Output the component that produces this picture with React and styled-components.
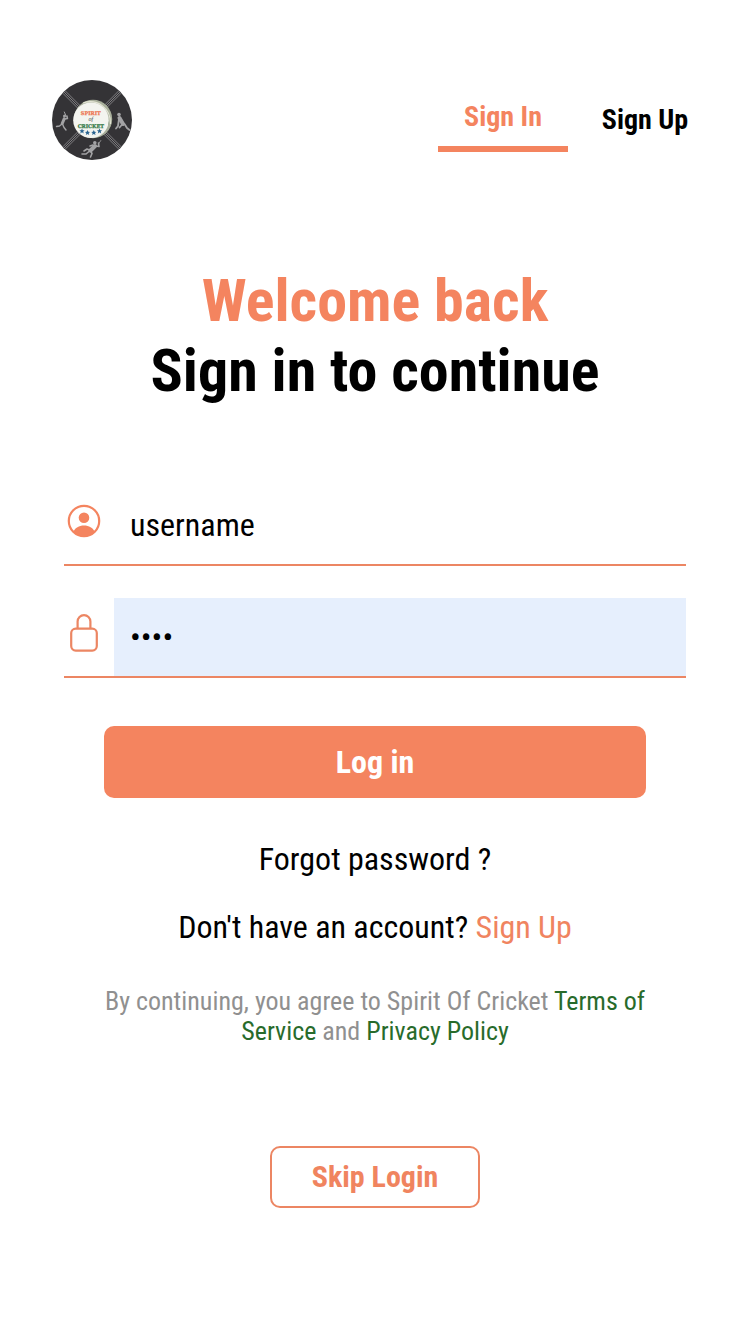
import React from "react";
import styled, { createGlobalStyle } from "styled-components";

const orange = "#f4845f";

const GlobalStyle = createGlobalStyle`
  * { box-sizing: border-box; }
  body {
    margin: 0;
    background: #fff;
    color: #000;
    font-family: "Roboto Condensed", "Liberation Sans Narrow", Roboto, sans-serif;
  }
`;

const Page = styled.div`
  display: flex;
  flex-direction: column;
  padding: 80px 40px;
`;

const Header = styled.header`
  display: flex;
  align-items: center;
  justify-content: space-between;
  padding-left: 12px;
`;

const LogoLink = styled.a`
  display: block;
  height: 80px;
`;

const Tabs = styled.nav`
  display: flex;
  align-items: center;
  gap: 12px;
`;

const Tab = styled.a`
  width: 130px;
  padding: ${(p) => (p.$active ? "13px 0" : "0")};
  border-bottom: ${(p) => (p.$active ? `6px solid ${orange}` : "0")};
  color: ${(p) => (p.$active ? orange : "#000")};
  font-size: 28px;
  font-weight: 700;
  line-height: 32px;
  text-align: center;
  text-decoration: none;
`;

const Title = styled.h1`
  margin: 106px 0 80px;
  font-size: 60px;
  font-weight: 700;
  line-height: 70px;
  text-align: center;
`;

const TitleLine = styled.span`
  display: block;
  color: ${(p) => (p.$accent ? orange : "inherit")};
`;

const Form = styled.form`
  display: flex;
  flex-direction: column;
  gap: 32px;
  padding: 0 24px;
`;

const Field = styled.label`
  display: flex;
  height: 80px;
  border-bottom: 2px solid #ec8663;
`;

const IconSlot = styled.span`
  display: flex;
  flex: none;
  align-items: center;
  justify-content: center;
  width: 40px;
  height: 70px;
`;

const Input = styled.input`
  flex: 1;
  min-width: 0;
  margin-left: 10px;
  padding: 0 16px;
  border: 0;
  border-radius: 0;
  outline: 0;
  background: ${(p) => (p.$filled ? "#e6effd" : "transparent")};
  color: #000;
  font-family: inherit;
  font-size: 32px;

  &::placeholder {
    color: #000;
    opacity: 1;
  }
`;

const LoginButton = styled.button`
  height: 72px;
  margin: 16px 40px 0;
  border: 0;
  border-radius: 10px;
  background: ${orange};
  color: #fff;
  font-family: inherit;
  font-size: 32px;
  font-weight: 700;
`;

const Links = styled.div`
  display: flex;
  flex-direction: column;
  align-items: center;
  gap: 28px;
  margin-top: 41px;
  font-size: 32px;
  line-height: 40px;
`;

const TextLink = styled.a`
  color: ${(p) => p.$color || "inherit"};
  text-decoration: none;
`;

const Line = styled.p`
  margin: 0;
`;

const Terms = styled.p`
  max-width: 560px;
  margin: 39px auto 100px;
  color: #909090;
  font-size: 26px;
  line-height: 30px;
  text-align: center;
`;

const SkipButton = styled.button`
  align-self: center;
  width: 210px;
  height: 62px;
  padding: 0 0 2px;
  border: 2px solid #ec8663;
  border-radius: 10px;
  background: #fff;
  color: #f0845f;
  font-family: inherit;
  font-size: 30px;
  font-weight: 700;
`;

const star = "M0-2.6 .8-.8 2.6-.7 1.2.5 1.7 2.4 0 1.3-1.7 2.4-1.2.5-2.6-.7-.8-.8Z";

function Logo() {
  return (
    <svg width="80" height="80" viewBox="0 0 80 80" role="img" aria-label="Spirit of Cricket">
      <defs>
        <clipPath id="disc">
          <circle cx="40" cy="40" r="40" />
        </clipPath>
      </defs>
      <circle cx="40" cy="40" r="40" fill="#343336" />
      <g clipPath="url(#disc)" stroke="#88878a" strokeWidth=".9">
        <path d="M10.800 13.200 66.800 69.200M12 12 68 68M13.200 10.800 69.200 66.800M69.200 13.200 13.200 69.200M68 12 12 68M66.800 10.800 10.800 66.800" />
      </g>
      <circle cx="41" cy="39" r="19.200" fill="#a9b09c" />
      <path d="M31 23c14-5 28 5 27.500 21" fill="none" stroke="#e4e5d5" strokeWidth="1.200" />
      <path d="M32 24.500c12-4 25 5 24.500 20" fill="none" stroke="#5f7a58" strokeWidth="1" />
      <circle cx="39" cy="40.200" r="17.800" fill="#f3f4ef" />
      <text x="38.800" y="35" textAnchor="middle" fontFamily="DejaVu Serif, serif" fontWeight="700" fontSize="5" fill="#ed7652" stroke="#ed7652" strokeWidth=".25">SPIRIT</text>
      <text x="38.800" y="41" textAnchor="middle" fontFamily="Liberation Serif, serif" fontStyle="italic" fontSize="6" fill="#444">of</text>
      <text x="38.800" y="47.500" textAnchor="middle" fontFamily="DejaVu Serif, serif" fontWeight="700" fontSize="5" fill="#357a48" stroke="#357a48" strokeWidth=".25">CRICKET</text>
      <g fill="#2a6490">
        <path d={star} transform="translate(30 51)" />
        <path d={star} transform="translate(35.500 52.600)" />
        <path d={star} transform="translate(41.800 52.600)" />
        <path d={star} transform="translate(47.500 51)" />
      </g>
      <g fill="none" stroke="#a3a3a5" strokeLinecap="round" strokeLinejoin="round">
        <path d="M12.300 32 14.500 37" strokeWidth="1" />
        <path d="M12.200 38.800 10.200 43.500" strokeWidth="3" />
        <path d="M12.500 39 15.500 38.500 15 36M10 44 7.500 46 4.500 46.500M10.500 44 12 47.500 14 50" strokeWidth="1.400" />
        <path d="M67.500 38 71 44" strokeWidth="4" />
        <path d="M67 39 66 46 64 48.500M70.500 44 67.500 47.500M72.500 44 75 48 77.500 50" strokeWidth="1.800" />
        <path d="M43 66 38.500 70.500" strokeWidth="4" />
        <path d="M44 66 47 66.500 46.500 63M41 65 38 66M37.500 70 35 69 32 71M38.500 71 40 73.500 38.500 77M37 71.500 34 74 30 74" strokeWidth="1.600" />
        <path d="M46.500 64 48.800 60.500" strokeWidth=".8" />
      </g>
      <g fill="#a3a3a5">
        <circle cx="12.500" cy="36" r="1.500" />
        <circle cx="67" cy="34.500" r="1.800" />
        <circle cx="42.800" cy="62.700" r="1.800" />
      </g>
    </svg>
  );
}

function UserIcon() {
  return (
    <svg width="40" height="40" viewBox="0 0 40 40" aria-hidden="true">
      <circle cx="20" cy="20" r="15.200" fill="none" stroke={orange} strokeWidth="2.200" />
      <circle cx="20" cy="16.700" r="5.300" fill={orange} />
      <path d="M9.500 30.500C11 27 15 24.500 20 24.500S29 27 30.500 30.500C28 33.500 24 35.500 20 35.500S12 33.500 9.500 30.500Z" fill={orange} />
    </svg>
  );
}

function LockIcon() {
  return (
    <svg width="40" height="40" viewBox="0 0 40 40" aria-hidden="true" fill="none" stroke="#ec8663" strokeWidth="2.200">
      <rect x="7.200" y="15.600" width="25.600" height="22" rx="4.500" />
      <path d="M13.600 15.600V8.500a6.400 6.400 0 0 1 12.800 0v7.100" />
    </svg>
  );
}

export default function App() {
  return (
    <>
      <GlobalStyle />
      <Page>
        <Header>
          <LogoLink href="#"><Logo /></LogoLink>
          <Tabs>
            <Tab href="#signin" $active aria-current="page">Sign In</Tab>
            <Tab href="#signup">Sign Up</Tab>
          </Tabs>
        </Header>
        <main>
          <Title>
            <TitleLine $accent>Welcome back</TitleLine>
            <TitleLine>Sign in to continue</TitleLine>
          </Title>
          <Form onSubmit={(e) => e.preventDefault()}>
            <Field>
              <IconSlot><UserIcon /></IconSlot>
              <Input type="text" aria-label="Username" placeholder="username" />
            </Field>
            <Field>
              <IconSlot><LockIcon /></IconSlot>
              <Input type="password" aria-label="Password" defaultValue="1234" $filled />
            </Field>
            <LoginButton type="submit">Log in</LoginButton>
          </Form>
          <Links>
            <TextLink href="#forgot">Forgot password ?</TextLink>
            <Line>
              Don't have an account? <TextLink href="#signup" $color="#f0845f">Sign Up</TextLink>
            </Line>
          </Links>
          <Terms>
            By continuing, you agree to Spirit Of Cricket{" "}
            <TextLink href="#terms" $color="#286b2b">Terms of Service</TextLink> and{" "}
            <TextLink href="#privacy" $color="#286b2b">Privacy Policy</TextLink>
          </Terms>
        </main>
        <SkipButton type="button">Skip Login</SkipButton>
      </Page>
    </>
  );
}
